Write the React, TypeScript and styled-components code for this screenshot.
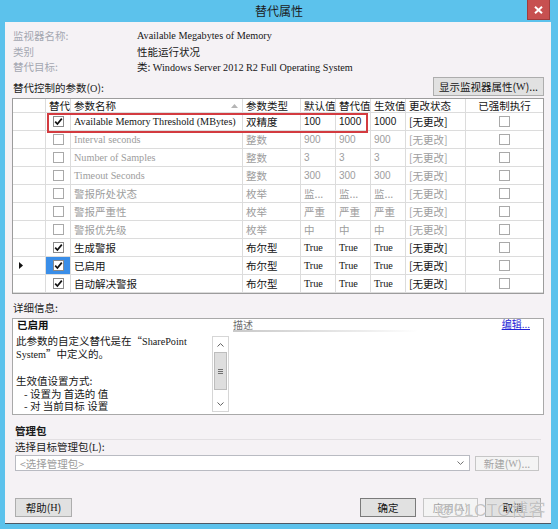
import React from 'react';
import styled, { createGlobalStyle } from 'styled-components';

const CJK = `"Noto Sans CJK SC", "Microsoft YaHei", sans-serif`;
const SIM = `"Liberation Serif", "Noto Sans CJK SC", serif`;
const NUM = `"Liberation Sans", "Noto Sans CJK SC", sans-serif`;

const Global = createGlobalStyle`
  html, body { margin: 0; padding: 0; }
  body { width: 558px; height: 529px; overflow: hidden; font-family: ${CJK}; }
  * { box-sizing: border-box; }
`;

const Window = styled.div`
  position: relative;
  width: 558px;
  height: 529px;
  background: #5cc2ec;
  display: flex;
  flex-direction: column;
  padding-bottom: 5px;
`;

const TitleBar = styled.div`
  height: 22px;
  flex: none;
  display: grid;
  grid-template-columns: 1fr auto 1fr;
  align-items: start;
`;

const Title = styled.div`
  grid-column: 2;
  font-size: 12px;
  line-height: 22px;
  color: #1b1b1b;
`;

const Close = styled.div`
  grid-column: 3;
  justify-self: end;
  margin-right: 8px;
  width: 23px;
  height: 20px;
  background: #c75050;
  border: 1px solid #a03c3c;
  border-top: none;
  display: flex;
  align-items: center;
  justify-content: center;
`;

const Body = styled.div`
  flex: 1;
  margin: 0 7px 0 5px;
  background: #f5f2f5;
  border-bottom: 1px solid #4d5864;
  display: flex;
  flex-direction: column;
  padding: 6px 7px 0 7px;
`;

const Info = styled.div`
  display: grid;
  grid-template-columns: 124px 1fr;
  font-size: 10.5px;
  line-height: 15.5px;
  padding-left: 1px;
`;

const InfoLabel = styled.div`
  color: #a4a7b1;
`;

const InfoValue = styled.div<{ $sim?: boolean }>`
  color: #151515;
  font-family: ${p => (p.$sim ? SIM : CJK)};
  font-size: ${p => (p.$sim ? '10.2px' : '10.5px')};
`;

const ParamBar = styled.div`
  margin-top: 1.5px;
  display: flex;
  justify-content: space-between;
  align-items: flex-end;
  padding-left: 1px;
`;

const SectionLabel = styled.div<{ $bold?: boolean }>`
  font-size: 10.5px;
  line-height: 14px;
  color: #1b1b1b;
  font-weight: ${p => (p.$bold ? 700 : 400)};
`;

const Button = styled.div<{ $disabled?: boolean; $w?: number; $h?: number; $def?: boolean }>`
  width: ${p => p.$w ?? 56}px;
  height: ${p => p.$h ?? 19}px;
  display: flex;
  align-items: center;
  justify-content: center;
  font-size: 10.5px;
  white-space: nowrap;
  background: ${p => (p.$disabled ? '#f4f4f4' : '#e1e1e1')};
  border: 1px solid ${p => (p.$disabled ? '#c6c6c6' : p.$def ? '#7a7a7a' : '#adadad')};
  color: ${p => (p.$disabled ? '#a3a3a3' : '#151515')};
`;

const Sim = styled.span`
  font-family: ${SIM};
  font-size: 10.2px;
`;

const Table = styled.div`
  position: relative;
  margin-top: 2px;
  border: 1px solid #9c9c9c;
  background: #fff;
`;

const COLS = '33px 25px 172px 58px 35px 35px 35px 60px 1fr';

const HeadRow = styled.div`
  display: grid;
  grid-template-columns: ${COLS};
  height: 14px;
  border-bottom: 1px solid #dcdcdc;
`;

const Row = styled.div`
  display: grid;
  grid-template-columns: ${COLS};
  height: 18px;
  border-bottom: 1px solid #dcdcdc;
  &:last-child { border-bottom: none; }
`;

type Font = 'cjk' | 'sim' | 'num';

const Cell = styled.div<{ $muted?: boolean; $font?: Font; $center?: boolean; $sel?: boolean; $split?: boolean }>`
  border-right: 1px solid #dcdcdc;
  display: flex;
  align-items: center;
  justify-content: ${p => (p.$center ? 'center' : p.$split ? 'space-between' : 'flex-start')};
  padding: 0 ${p => (p.$split ? 4 : 0)}px 0 ${p => (p.$center ? 0 : 3)}px;
  overflow: hidden;
  white-space: nowrap;
  color: ${p => (p.$muted ? '#9d9d9d' : '#141414')};
  font-family: ${p => (p.$font === 'sim' ? SIM : p.$font === 'num' ? NUM : CJK)};
  font-size: ${p => (p.$font === 'sim' ? '10.2px' : p.$font === 'num' ? '10px' : '10.5px')};
  background: ${p => (p.$sel ? '#3a8ee8' : 'transparent')};
  &:last-child { border-right: none; }
`;

const RowHead = styled(Cell)`
  padding-left: 6px;
`;

const Box = styled.span<{ $muted?: boolean }>`
  width: 11px;
  height: 11px;
  border: 1px solid ${p => (p.$muted ? '#a9a9a9' : '#8a8a8a')};
  background: #fff;
  display: inline-flex;
  align-items: center;
  justify-content: center;
`;

const Highlight = styled.div`
  position: absolute;
  left: 34px;
  top: 14px;
  width: 321px;
  height: 20px;
  border: 2px solid #d33b40;
  pointer-events: none;
`;

const DetailLabelWrap = styled.div`
  padding: 7px 0 3px 1px;
`;

const DetailBox = styled.div`
  height: 97px;
  border: 1px solid #a9a9a9;
  background: #fff;
  display: grid;
  grid-template-columns: 217px 1fr;
  overflow: hidden;
`;

const LeftCol = styled.div`
  display: flex;
  flex-direction: column;
  min-height: 0;
`;

const DetailHead = styled.div`
  height: 15px;
  padding-left: 4px;
  font-size: 10.5px;
  line-height: 12px;
  font-weight: 700;
  color: #111;
`;

const Pane = styled.div`
  flex: 1;
  display: flex;
  min-height: 0;
`;

const PaneText = styled.div`
  flex: 1;
  padding-left: 3px;
  font-size: 10.5px;
  line-height: 12.75px;
  color: #161616;
  overflow: hidden;
  white-space: pre;
  padding-top: 0.5px;
`;

const Line = styled.div<{ $indent?: boolean }>`
  padding-left: ${p => (p.$indent ? 8 : 0)}px;
`;

const Scroll = styled.div`
  width: 17px;
  margin: 2px 1px 0 0;
  height: 76px;
  display: flex;
  flex-direction: column;
  border: 1px solid #d6d6d6;
  background: #fff;
`;

const ScrollBtn = styled.div`
  height: 15px;
  display: flex;
  align-items: center;
  justify-content: center;
`;

const Thumb = styled.div`
  height: 38px;
  margin: 0 1px;
  background: #dedede;
  border: 1px solid #bdbdbd;
  display: flex;
  align-items: center;
  justify-content: center;
`;

const Track = styled.div`
  flex: 1;
`;

const RightCol = styled.div`
  display: flex;
  flex-direction: column;
  padding-left: 3px;
  padding-right: 13px;
`;

const RightHead = styled.div`
  display: flex;
  justify-content: space-between;
  align-items: flex-start;
  height: 11px;
`;

const DescLabel = styled.span`
  font-size: 10px;
  line-height: 10px;
  color: #6e6e6e;
  padding-top: 1px;
`;

const EditLink = styled.span`
  font-size: 10px;
  line-height: 9px;
  color: #2323d6;
  text-decoration: underline;
`;

const Fade = styled.div`
  width: 185px;
  height: 2px;
  background: linear-gradient(to right, #c9c9c9, #ececec 70%, rgba(255, 255, 255, 0));
`;

const MgmtSection = styled.div`
  padding: 9px 3px 0 3px;
  display: flex;
  flex-direction: column;
`;

const MgmtTitle = styled(SectionLabel)`
  border-bottom: 1px solid #e2dfe2;
  padding-bottom: 1px;
`;

const ComboRow = styled.div`
  display: flex;
  gap: 5px;
  align-items: center;
`;

const Combo = styled.div`
  width: 455px;
  height: 16px;
  border: 1px solid #b9bbc2;
  background: #fff;
  display: flex;
  align-items: center;
  justify-content: space-between;
  padding: 0 5px 0 4px;
  font-size: 10.5px;
  color: #9b9b9b;
`;

const Footer = styled.div`
  margin-top: auto;
  padding: 0 3px 6px 3px;
  display: flex;
  align-items: center;
  gap: 7px;
`;

const Spacer = styled.div`
  flex: 1;
`;

const Watermark = styled.div`
  position: absolute;
  right: 12px;
  bottom: 8px;
  font-family: ${NUM};
  font-size: 17px;
  color: rgba(140, 140, 140, 0.5);
  text-shadow: 0 0 1px rgba(255, 255, 255, 0.9);
  pointer-events: none;
  letter-spacing: 0.5px;
`;

const Check = ({ checked, muted }: { checked: boolean; muted?: boolean }) => (
  <Box $muted={muted}>
    {checked && (
      <svg width="9" height="9" viewBox="0 0 9 9">
        <polyline points="1.2,4.6 3.4,7 7.8,1.6" fill="none" stroke="#111" strokeWidth="1.7" />
      </svg>
    )}
  </Box>
);

type Data = {
  checked: boolean;
  name: string;
  nameFont: Font;
  type: string;
  vals: string[];
  valFont: Font;
  active: boolean;
  current?: boolean;
};

const data: Data[] = [
  { checked: true, name: 'Available Memory Threshold (MBytes)', nameFont: 'sim', type: '双精度', vals: ['100', '1000', '1000'], valFont: 'num', active: true },
  { checked: false, name: 'Interval seconds', nameFont: 'sim', type: '整数', vals: ['900', '900', '900'], valFont: 'num', active: false },
  { checked: false, name: 'Number of Samples', nameFont: 'sim', type: '整数', vals: ['3', '3', '3'], valFont: 'num', active: false },
  { checked: false, name: 'Timeout Seconds', nameFont: 'sim', type: '整数', vals: ['300', '300', '300'], valFont: 'num', active: false },
  { checked: false, name: '警报所处状态', nameFont: 'cjk', type: '枚举', vals: ['监...', '监...', '监...'], valFont: 'cjk', active: false },
  { checked: false, name: '警报严重性', nameFont: 'cjk', type: '枚举', vals: ['严重', '严重', '严重'], valFont: 'cjk', active: false },
  { checked: false, name: '警报优先级', nameFont: 'cjk', type: '枚举', vals: ['中', '中', '中'], valFont: 'cjk', active: false },
  { checked: true, name: '生成警报', nameFont: 'cjk', type: '布尔型', vals: ['True', 'True', 'True'], valFont: 'sim', active: true },
  { checked: true, name: '已启用', nameFont: 'cjk', type: '布尔型', vals: ['True', 'True', 'True'], valFont: 'sim', active: true, current: true },
  { checked: true, name: '自动解决警报', nameFont: 'cjk', type: '布尔型', vals: ['True', 'True', 'True'], valFont: 'sim', active: true },
];

const detailLines: { text: string; indent?: boolean }[] = [
  { text: '此参数的自定义替代是在“SharePoint' },
  { text: 'System”中定义的。' },
  { text: '' },
  { text: '生效值设置方式:' },
  { text: '- 设置为 首选的 值', indent: true },
  { text: '- 对 当前目标 设置', indent: true },
  { text: '- 在“SharePoint System”中的 自定义 替', indent: true },
];

const renderMixed = (s: string) =>
  s.split(/([A-Za-z][A-Za-z ]*[A-Za-z]|[A-Za-z])/).map((part, i) =>
    /[A-Za-z]/.test(part) ? <Sim key={i}>{part}</Sim> : <React.Fragment key={i}>{part}</React.Fragment>
  );

export default function App() {
  return (
    <Window>
      <Global />
      <TitleBar>
        <Title>替代属性</Title>
        <Close>
          <svg width="9" height="8" viewBox="0 0 9 8">
            <path d="M1 0.8 L8 7.2 M8 0.8 L1 7.2" stroke="#fff" strokeWidth="2" />
          </svg>
        </Close>
      </TitleBar>
      <Body>
        <Info>
          <InfoLabel>监视器名称:</InfoLabel>
          <InfoValue $sim>Available Megabytes of Memory</InfoValue>
          <InfoLabel>类别</InfoLabel>
          <InfoValue>性能运行状况</InfoValue>
          <InfoLabel>替代目标:</InfoLabel>
          <InfoValue>
            类: <Sim>Windows Server 2012 R2 Full Operating System</Sim>
          </InfoValue>
        </Info>
        <ParamBar>
          <SectionLabel>
            替代控制的参数(<Sim>O</Sim>):
          </SectionLabel>
          <Button $w={111}>
            显示监视器属性(<Sim>W</Sim>)...
          </Button>
        </ParamBar>
        <Table>
          <HeadRow>
            <Cell />
            <Cell>替代</Cell>
            <Cell $split>
              参数名称
              <svg width="7" height="4" viewBox="0 0 7 4">
                <path d="M0 4 L3.5 0 L7 4 Z" fill="#b5b5b5" />
              </svg>
            </Cell>
            <Cell>参数类型</Cell>
            <Cell>默认值</Cell>
            <Cell>替代值</Cell>
            <Cell>生效值</Cell>
            <Cell>更改状态</Cell>
            <Cell $center>已强制执行</Cell>
          </HeadRow>
          {data.map((r, i) => {
            const muted = !r.active;
            return (
              <Row key={i}>
                <RowHead>
                  {r.current && (
                    <svg width="4" height="7" viewBox="0 0 4 7">
                      <path d="M0 0 L4 3.5 L0 7 Z" fill="#111" />
                    </svg>
                  )}
                </RowHead>
                <Cell $center $sel={r.current}>
                  <Check checked={r.checked} muted={muted} />
                </Cell>
                <Cell $muted={muted} $font={r.nameFont}>{r.name}</Cell>
                <Cell $muted={muted}>{r.type}</Cell>
                {r.vals.map((v, j) => (
                  <Cell key={j} $muted={muted} $font={r.valFont}>{v}</Cell>
                ))}
                <Cell $muted={muted}>[无更改]</Cell>
                <Cell $center>
                  <Check checked={false} muted />
                </Cell>
              </Row>
            );
          })}
          <Highlight />
        </Table>
        <DetailLabelWrap>
          <SectionLabel>详细信息:</SectionLabel>
        </DetailLabelWrap>
        <DetailBox>
          <LeftCol>
            <DetailHead>已启用</DetailHead>
            <Pane>
              <PaneText>
                {detailLines.map((l, i) => (
                  <Line key={i} $indent={l.indent}>
                    {l.text === '' ? '\u00a0' : renderMixed(l.text)}
                  </Line>
                ))}
              </PaneText>
              <Scroll>
                <ScrollBtn>
                  <svg width="7" height="4" viewBox="0 0 7 4">
                    <path d="M0.5 3.5 L3.5 0.6 L6.5 3.5" fill="none" stroke="#606060" strokeWidth="1" />
                  </svg>
                </ScrollBtn>
                <Thumb>
                  <svg width="5" height="5" viewBox="0 0 5 5">
                    <path d="M0 0.5 H5 M0 2.5 H5 M0 4.5 H5" stroke="#707070" strokeWidth="1" />
                  </svg>
                </Thumb>
                <Track />
                <ScrollBtn>
                  <svg width="7" height="4" viewBox="0 0 7 4">
                    <path d="M0.5 0.5 L3.5 3.4 L6.5 0.5" fill="none" stroke="#606060" strokeWidth="1" />
                  </svg>
                </ScrollBtn>
              </Scroll>
            </Pane>
          </LeftCol>
          <RightCol>
            <RightHead>
              <DescLabel>描述</DescLabel>
              <EditLink>编辑...</EditLink>
            </RightHead>
            <Fade />
          </RightCol>
        </DetailBox>
        <MgmtSection>
          <MgmtTitle $bold>管理包</MgmtTitle>
          <SectionLabel>
            选择目标管理包(<Sim>L</Sim>):
          </SectionLabel>
          <ComboRow>
            <Combo>
              <span>&lt;选择管理包&gt;</span>
              <svg width="7" height="4" viewBox="0 0 7 4">
                <path d="M0.5 0.5 L3.5 3.4 L6.5 0.5" fill="none" stroke="#707070" strokeWidth="1" />
              </svg>
            </Combo>
            <Button $disabled $w={64} $h={15}>
              新建(<Sim>W</Sim>)...
            </Button>
          </ComboRow>
        </MgmtSection>
        <Footer>
          <Button $w={57}>
            帮助(<Sim>H</Sim>)
          </Button>
          <Spacer />
          <Button $def>确定</Button>
          <Button $disabled $w={55}>
            应用(<Sim>A</Sim>)
          </Button>
          <Button>取消</Button>
        </Footer>
      </Body>
      <Watermark>@51CTO博客</Watermark>
    </Window>
  );
}
